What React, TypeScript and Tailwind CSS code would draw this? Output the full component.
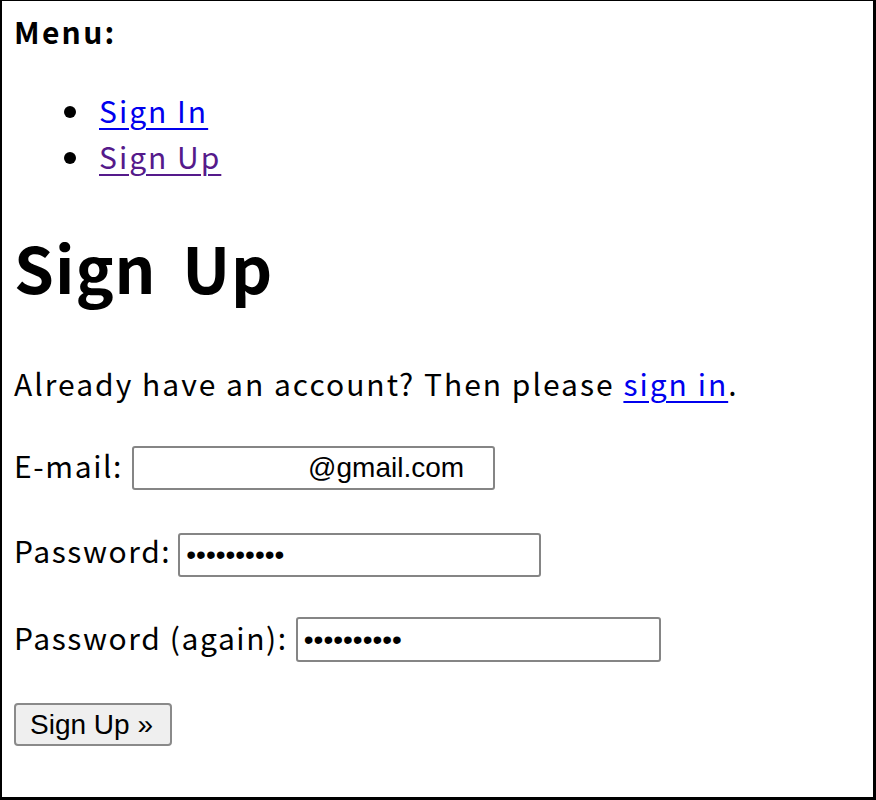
import React from 'react';

const body = { fontFamily: '"Noto Sans CJK KR", "Noto Sans", sans-serif' };
const ctrl = { fontFamily: '"Liberation Sans", Arial, sans-serif' };

export default function App() {
  return (
    <div
      style={body}
      className="w-[876px] h-[800px] bg-white text-black border-t border-l-2 border-r-[3px] border-b-[3px] border-black pl-[12px] pt-[7px] text-[30px] leading-[46px] tracking-[2px]"
    >
      <div className="font-bold tracking-[2.3px]">Menu:</div>

      <ul className="mt-[33px] pl-[50px]">
        <li className="flex items-start">
          <span className="mt-[19px] w-[12px] h-[12px] rounded-full bg-black" />
          <a href="#" className="ml-[23px] text-[#0000ee] underline underline-offset-[5px] decoration-2">
            Sign In
          </a>
        </li>
        <li className="flex items-start">
          <span className="mt-[19px] w-[12px] h-[12px] rounded-full bg-black" />
          <a href="#" className="ml-[23px] text-[#551a8b] underline underline-offset-[5px] decoration-2">
            Sign Up
          </a>
        </li>
      </ul>

      <h1 className="mt-[47px] text-[64px] leading-[80px] font-bold tracking-[1px] [word-spacing:10px]">Sign Up</h1>

      <p className="mt-[54px]">
        Already have an account? Then please{' '}
        <a href="#" className="text-[#0000ee] underline underline-offset-[5px] decoration-2">
          sign in
        </a>
        .
      </p>

      <form className="flex flex-col">
        <div className="mt-[36px] flex items-start">
          <label className="tracking-[1.6px]">E-mail:</label>
          <input
            readOnly
            value="@gmail.com"
            style={ctrl}
            className="ml-[9px] mt-[4px] w-[363px] h-[44px] border-2 border-[#858585] rounded-[3px] pl-[174px] text-[28px] tracking-normal text-black outline-none"
          />
        </div>

        <div className="mt-[37px] flex items-start">
          <label className="tracking-[1.6px]">Password:</label>
          <input
            readOnly
            type="password"
            value="••••••••••"
            style={ctrl}
            className="ml-[7px] mt-[6px] w-[363px] h-[44px] border-2 border-[#858585] rounded-[3px] pl-[6px] text-[28px] tracking-normal text-black outline-none"
          />
        </div>

        <div className="mt-[37px] flex items-start">
          <label className="tracking-[1.6px]">Password (again):</label>
          <input
            readOnly
            type="password"
            value="••••••••••"
            style={ctrl}
            className="ml-[8px] mt-[3px] w-[365px] h-[45px] border-2 border-[#858585] rounded-[3px] pl-[6px] text-[28px] tracking-normal text-black outline-none"
          />
        </div>

        <div className="mt-[41px] flex">
          <button
            type="button"
            style={ctrl}
            className="flex items-center w-[158px] h-[43px] border-2 border-[#8a8a8a] rounded-[4px] bg-[#efefef] pl-[14px] text-[28px] leading-none tracking-normal text-black whitespace-nowrap"
          >
            Sign Up »
          </button>
        </div>
      </form>
    </div>
  );
}
